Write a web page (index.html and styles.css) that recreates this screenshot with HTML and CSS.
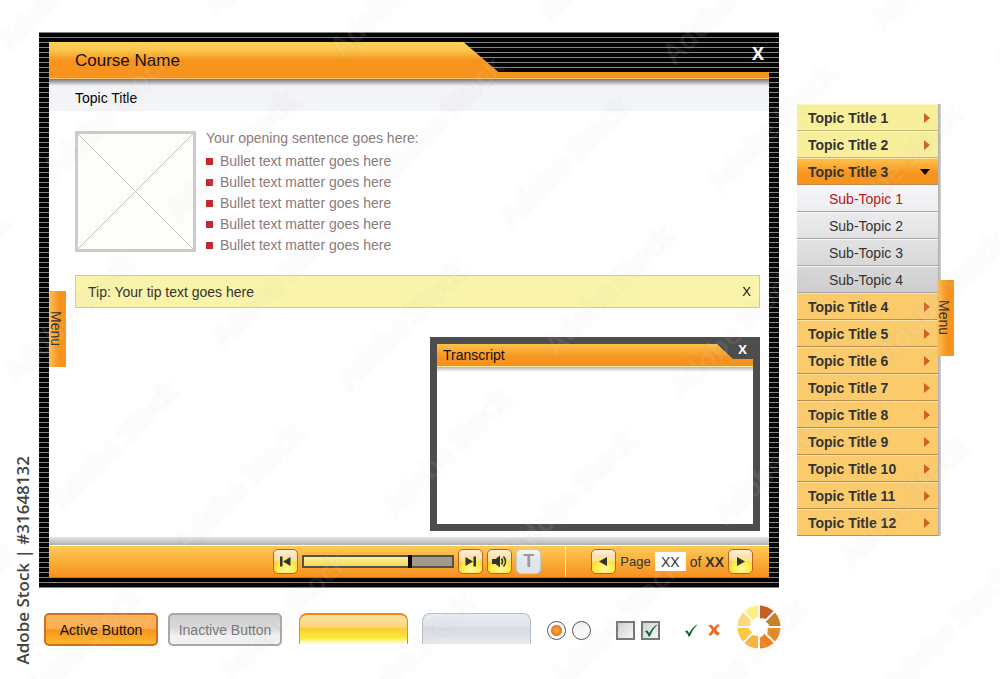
FILE: index.html
```html
<!DOCTYPE html>
<html lang="en">
<head>
  <meta charset="UTF-8" />
  <title>Course Player</title>
  <link rel="stylesheet" href="styles.css">
</head>
<body>
  <div class="page">
    <div class="credit">Adobe Stock | #31648132</div>

    <main class="main">
      <section class="player">
        <header class="player-header">
          <h1 class="course-name">Course Name</h1>
          <button class="close" aria-label="Close course">X</button>
        </header>

        <div class="player-body">
          <button class="menu-tab menu-tab-left">Menu</button>
          <h2 class="topic-title">Topic Title</h2>

          <div class="content">
            <div class="intro">
              <svg class="placeholder" viewBox="0 0 115 115" aria-hidden="true">
                <path d="M0 0L115 115M115 0L0 115" stroke="#c4c4c4" stroke-width="1" fill="none"/>
              </svg>
              <div class="intro-text">
                <p>Your opening sentence goes here:</p>
                <ul>
                  <li>Bullet text matter goes here</li>
                  <li>Bullet text matter goes here</li>
                  <li>Bullet text matter goes here</li>
                  <li>Bullet text matter goes here</li>
                  <li>Bullet text matter goes here</li>
                </ul>
              </div>
            </div>

            <div class="tip">
              <span>Tip: Your tip text goes here</span>
              <button class="tip-close" aria-label="Close tip">X</button>
            </div>

            <section class="transcript">
              <header class="transcript-header">
                <h3>Transcript</h3>
                <button class="close" aria-label="Close transcript">X</button>
              </header>
              <div class="transcript-body"></div>
            </section>
          </div>
        </div>

        <footer class="toolbar">
          <div class="media">
            <button class="tool" aria-label="Previous">
              <svg viewBox="0 0 23 23"><path d="M6 6.500h2.500v10H6zM16.500 7v9l-7.500-4.500z"/></svg>
            </button>
            <input class="seek" type="range" min="0" max="100" value="72" style="--value: 72%" aria-label="Seek">
            <button class="tool" aria-label="Next">
              <svg viewBox="0 0 23 23"><path d="M14.500 6.500H17v10h-2.500zM6.500 7v9l7.500-4.500z"/></svg>
            </button>
            <button class="tool" aria-label="Sound">
              <svg viewBox="0 0 23 23"><path d="M4 9h3.500l4.500-3.500v12L7.500 14H4z"/><path d="M13.500 8.500q2 3 0 6M15.500 6.500q4 5 0 10" fill="none" stroke="#333" stroke-width="1.600"/></svg>
            </button>
            <button class="tool tool-off" aria-label="Transcript">T</button>
          </div>
          <div class="pager">
            <button class="tool" aria-label="Previous page">
              <svg viewBox="0 0 23 23"><path d="M15 7v9L7 11.500z"/></svg>
            </button>
            <label for="page-number">Page</label>
            <input id="page-number" type="text" value="XX">
            <span>of <b>XX</b></span>
            <button class="tool" aria-label="Next page">
              <svg viewBox="0 0 23 23"><path d="M8 7v9l8-4.500z"/></svg>
            </button>
          </div>
        </footer>
      </section>

      <div class="samples">
        <button class="btn btn-active">Active Button</button>
        <button class="btn btn-inactive" disabled>Inactive Button</button>
        <div class="tab tab-on"></div>
        <div class="tab tab-off"></div>
        <div class="radios">
          <input type="radio" name="option" aria-label="Option 1" checked>
          <input type="radio" name="option" aria-label="Option 2">
        </div>
        <div class="checks">
          <label class="check"><input type="checkbox" aria-label="Unticked"></label>
          <label class="check">
            <input type="checkbox" aria-label="Ticked" checked>
            <svg viewBox="0 0 12 13"><path d="M0 7.500L2 6.200Q3.400 7.400 4 9.300Q7 3.500 11.700.5L12 1Q7.300 5.500 4.800 12.500H3.500Q2.300 9 0 7.500z"/></svg>
          </label>
        </div>
        <div class="marks">
          <svg class="tick" viewBox="0 0 12 13"><path d="M0 7.500L2 6.200Q3.400 7.400 4 9.300Q7 3.500 11.700.5L12 1Q7.300 5.500 4.800 12.500H3.500Q2.300 9 0 7.500z"/></svg>
          <svg class="cross" viewBox="0 0 12 12"><path d="M.3 1.800L3 .4Q5 1.800 6 3.700Q7.800 1 10 0L11.800 1.800Q9.500 3 8 5.800Q9.400 8 11.800 9L11 10.500L9.500 11.800Q7 10.500 5.800 8Q4.500 10.500 2.500 12L.4 10Q3 8.500 4 6Q2.500 3 .3 1.800z"/></svg>
        </div>
        <svg class="wheel" viewBox="-22 -22 44 44">
          <defs><path id="slice" d="M1-8.500V-21.500A21.500 21.500 0 0 1 14.500-15.900L6.700-8.100A9 9 0 0 0 1-8.500z"/></defs>
          <use href="#slice" fill="#c75f23"/>
          <use href="#slice" fill="#c9812b" transform="rotate(45)"/>
          <use href="#slice" fill="#e38a25" transform="rotate(90)"/>
          <use href="#slice" fill="#ef7f1c" transform="rotate(135)"/>
          <use href="#slice" fill="#fbb33a" transform="rotate(180)"/>
          <use href="#slice" fill="#fcc83f" transform="rotate(225)"/>
          <use href="#slice" fill="#fcd781" transform="rotate(270)"/>
          <use href="#slice" fill="#fbee82" transform="rotate(315)"/>
        </svg>
      </div>
    </main>

    <nav class="sidebar">
      <ul class="topics">
        <li class="light"><a href="#">Topic Title 1</a></li>
        <li class="light"><a href="#">Topic Title 2</a></li>
        <li class="open"><a href="#">Topic Title 3</a>
          <ul class="subtopics">
            <li class="current"><a href="#">Sub-Topic 1</a></li>
            <li><a href="#">Sub-Topic 2</a></li>
            <li><a href="#">Sub-Topic 3</a></li>
            <li><a href="#">Sub-Topic 4</a></li>
          </ul>
        </li>
        <li><a href="#">Topic Title 4</a></li>
        <li><a href="#">Topic Title 5</a></li>
        <li><a href="#">Topic Title 6</a></li>
        <li><a href="#">Topic Title 7</a></li>
        <li><a href="#">Topic Title 8</a></li>
        <li><a href="#">Topic Title 9</a></li>
        <li><a href="#">Topic Title 10</a></li>
        <li><a href="#">Topic Title 11</a></li>
        <li><a href="#">Topic Title 12</a></li>
      </ul>
      <button class="menu-tab menu-tab-right">Menu</button>
    </nav>
  </div>

  <svg class="watermark" aria-hidden="true">
    <defs>
      <pattern id="mark" width="230" height="240" patternUnits="userSpaceOnUse" patternTransform="translate(62 512) rotate(-45) translate(0 -40)">
        <text x="0" y="40">Adobe Stock</text>
        <text x="59" y="158">Adobe Stock</text>
      </pattern>
    </defs>
    <rect width="100%" height="100%" fill="url(#mark)"/>
  </svg>
</body>
</html>
```
FILE: styles.css
```css
* {
  box-sizing: border-box;
}

body {
  margin: 0;
  background: #fff;
  color: #333;
  font-family: "Liberation Sans", Arial, sans-serif;
  font-size: 14px;
}

h1, h2, h3, p, ul {
  margin: 0;
  padding: 0;
  font-weight: normal;
}

ul {
  list-style: none;
}

a {
  color: inherit;
  text-decoration: none;
}

button, input {
  font: inherit;
  margin: 0;
  padding: 0;
  border: none;
  background: none;
}

button {
  cursor: pointer;
}

.page {
  display: flex;
  padding: 32px 56px 0 0;
}

.credit {
  width: 39px;
  padding-right: 9px;
  align-self: flex-end;
  writing-mode: vertical-rl;
  transform: rotate(180deg);
  color: #444;
  font-family: "Open Sans", sans-serif;
  font-size: 17px;
  font-weight: 600;
  line-height: 28px;
  white-space: nowrap;
}

.main {
  flex: 1;
  min-width: 0;
  padding-bottom: 16px;
}

/* player window */

.player {
  padding: 10px 10px 11px;
  background: repeating-linear-gradient(#858585 0 1px, #050505 1px 5px);
}

.player-header {
  position: relative;
  display: flex;
  align-items: center;
  justify-content: space-between;
  height: 37px;
  padding: 0 5px 0 26px;
}

.player-header::before {
  content: "";
  position: absolute;
  inset: 0;
  background: linear-gradient(#fcd05a 0, #fbc94f 20%, #f7941e 50%, #f7941e 96%, #fcc46c 98%);
  clip-path: polygon(0 0, calc(57% + 4px) 0, calc(57% + 39px) 30px, 100% 30px, 100% 100%, 0 100%);
}

.course-name {
  position: relative;
  color: #111;
  font-size: 17px;
}

.close {
  position: relative;
  color: #fff;
  font-family: "Open Sans", sans-serif;
  font-weight: bold;
}

.player-header .close {
  align-self: flex-start;
  font-size: 18px;
  line-height: 22px;
}

.player-body {
  position: relative;
  background: #fff;
}

.player-body::before {
  content: "";
  display: block;
  height: 7px;
  background: linear-gradient(#77777a, #f3f4f7);
}

.player-body::after {
  content: "";
  display: block;
  height: 8px;
  border-bottom: 1px solid #fff;
  background: linear-gradient(#e4e4e4, #b2b2b2);
}

.topic-title {
  padding: 0 26px;
  background: #f3f4f7;
  color: #000;
  font-size: 14px;
  line-height: 25px;
}

.content {
  display: flex;
  flex-direction: column;
  padding: 20px 9px 6px 26px;
}

.intro {
  display: flex;
  gap: 10px;
  height: 121px;
  margin-bottom: 23px;
  color: #8a7b79;
}

.placeholder {
  width: 121px;
  height: 121px;
  border: 3px solid #ccc;
  background: #fdfefa;
}

.intro p {
  line-height: 14px;
  margin-bottom: 6px;
}

.intro li {
  display: flex;
  align-items: center;
  gap: 7px;
  line-height: 21px;
}

.intro li::before {
  content: "";
  width: 7px;
  height: 7px;
  background: #c3272f;
}

.tip {
  display: flex;
  align-items: center;
  justify-content: space-between;
  height: 33px;
  padding: 0 8px 0 12px;
  margin-bottom: 29px;
  border: 1px solid #cbc9b5;
  background: #f9f4a9;
}

.tip-close {
  color: #111;
  font-size: 13px;
}

.transcript {
  align-self: flex-end;
  width: 48%;
  min-width: 330px;
  border: 7px solid #4d4d4d;
  background: #4d4d4d;
}

.transcript-header {
  position: relative;
  display: flex;
  justify-content: space-between;
  height: 23px;
  padding: 0 6px;
}

.transcript-header::before {
  content: "";
  position: absolute;
  inset: 0;
  background: linear-gradient(#fcc04a, #f7941e 60%, #f7901e 94%, #fdeca0 95%);
  clip-path: polygon(0 0, calc(100% - 36px) 0, calc(100% - 20px) 15px, 100% 15px, 100% 100%, 0 100%);
}

.transcript h3 {
  position: relative;
  color: #111;
  font-size: 14px;
  line-height: 22px;
}

.transcript .close {
  font-size: 13px;
  line-height: 11px;
  align-self: flex-start;
}

.transcript-body {
  height: 157px;
  background: linear-gradient(#b5b5b5, #fff 5px);
}

/* pull-out menu handles */

.menu-tab {
  position: absolute;
  width: 17px;
  height: 76px;
  padding-right: 3px;
  writing-mode: vertical-rl;
  color: #333;
  line-height: 14px;
  background: linear-gradient(90deg, #fbc05a, #f7941e 60%);
}

.menu-tab-left {
  left: 0;
  top: 212px;
}

.menu-tab-right {
  right: -13px;
  top: 176px;
}

/* bottom toolbar */

.toolbar {
  display: flex;
  justify-content: flex-end;
  height: 31px;
  padding-right: 16px;
  background: linear-gradient(#fdcb55, #f7901e);
}

.media, .pager {
  display: flex;
  align-items: center;
  gap: 4px;
}

.media {
  padding-right: 24px;
  border-right: 1px solid #fff0d0;
}

.pager {
  padding-left: 25px;
}

.pager label {
  font-size: 13px;
}

.tool {
  display: flex;
  align-items: center;
  justify-content: center;
  width: 25px;
  height: 25px;
  border: 1px solid #b9641d;
  border-radius: 5px;
  background: radial-gradient(circle at 55% 85%, #fff6a0 0, #fdee4c 35%, transparent 60%), linear-gradient(#fdeed8 0, #fbdca0 48%, #fccb38 52%, #fde33c);
  color: #333;
}

.tool svg {
  width: 23px;
  height: 23px;
  fill: #333;
}

.tool-off {
  border-color: #c3ccd3;
  background: linear-gradient(#f4f6f7, #e1e6ea 50%, #dde3e8);
  color: #a49694;
  font-size: 18px;
  font-weight: bold;
}

.seek {
  width: 152px;
  height: 13px;
  border: 2px solid #55524a;
  background:
    linear-gradient(#a09a8e, #a09a8e) right / calc(100% - var(--value)) 100% no-repeat,
    linear-gradient(#fcf09a, #f8d85a);
  appearance: none;
}

.seek::-webkit-slider-thumb {
  appearance: none;
  width: 4px;
  height: 13px;
  background: #0a0a0a;
}

.pager input {
  width: 31px;
  height: 19px;
  background: #fff;
  color: #333;
  font-size: 14px;
  text-align: center;
}

/* sample controls under the player */

.samples {
  display: flex;
  align-items: flex-start;
  height: 44px;
  padding-left: 5px;
  margin: 17px -8px 0 0;
}

.btn {
  width: 114px;
  height: 33px;
  margin: 8px 10px 0 0;
  border: 2px solid #d2701c;
  border-radius: 5px;
}

.btn-active {
  border-color: #d2701c;
  background: linear-gradient(#fbb55c 0, #fcb056 45%, #f7941e 52%, #fcb82e);
  color: #111;
}

.btn-inactive {
  margin-right: 17px;
  border-color: #a8a8a8;
  background: linear-gradient(#cfcfcf 0, #d9d9d9 45%, #f1f1f3 70%);
  color: #777;
}

.tab {
  width: 109px;
  height: 31px;
  margin: 8px 14px 0 0;
  border-radius: 8px 8px 0 0;
}

.tab-on {
  border: solid #f08519;
  border-width: 2px 1px 0;
  background: linear-gradient(#fce0a0 0, #fbd777 42%, #fccb38 46%, #fdea3c 80%, #fff);
}

.tab-off {
  margin-right: 16px;
  border: solid #b3c1cc;
  border-width: 1px 1px 0;
  background: linear-gradient(#e9ecef 0, #dfe4e9 42%, #d5dbe1 46%, #e8ebee);
}

.radios, .checks, .marks {
  display: flex;
  align-items: center;
  height: 44px;
  padding-top: 6px;
}

.radios {
  gap: 6px;
  margin-right: 25px;
}

.radios input {
  width: 19px;
  height: 19px;
  border: 1px solid #555;
  border-radius: 50%;
  background: linear-gradient(#eee, #fff);
  appearance: none;
}

.radios input:checked {
  background: radial-gradient(circle, #fcb53e 0, #f58220 4px, #e8731c 5px, #fff 6px);
}

.checks {
  gap: 6px;
  margin-right: 25px;
}

.check {
  position: relative;
  display: flex;
}

.check input {
  width: 19px;
  height: 19px;
  border: 2px solid #777;
  background: linear-gradient(135deg, #d2d2d2, #f5f5f5);
  appearance: none;
}

.check svg {
  position: absolute;
  left: 4px;
  top: 3px;
  width: 12px;
  height: 13px;
  fill: #0b6a33;
}

.marks {
  gap: 11px;
  margin-right: 17px;
}

.tick {
  width: 12px;
  height: 13px;
  fill: #0b6a33;
}

.cross {
  width: 12px;
  height: 12px;
  fill: #f26a21;
}

.wheel {
  width: 44px;
  height: 44px;
}

/* topic navigation */

.sidebar {
  position: relative;
  align-self: flex-start;
  width: 144px;
  margin: 72px 3px 0 18px;
  padding-right: 3px;
  background: linear-gradient(90deg, #aaa, #d5d5d5) right / 3px 100% no-repeat;
}

.topics a {
  display: flex;
  align-items: center;
  justify-content: space-between;
  height: 27px;
  padding: 0 8px 0 11px;
  border-top: 1px solid #fde3a4;
  border-bottom: 1px solid #b88d52;
  background: #fbcb6b;
  color: #333;
  font-weight: bold;
}

.topics a::after {
  content: "";
  border: solid transparent;
  border-width: 5px 0 5px 6px;
  border-left-color: #cf6127;
}

.topics .light a {
  border-color: #fbf6c0 transparent #c2b878;
  background: #f8ef9b;
}

.topics .open > a {
  background: linear-gradient(#fcc04a, #f7941e 60%);
}

.topics .open > a::after {
  border-width: 6px 5px 0;
  border-color: #000 transparent;
}

.topics .subtopics {
  background: linear-gradient(#f7f7fa, #cdcdcd);
}

.topics .subtopics a {
  padding-left: 32px;
  border-color: #f7f7f7 transparent #a5a5a5;
  background: none;
  font-weight: normal;
}

.topics .subtopics a::after {
  content: none;
}

.topics .current a {
  color: #b5121b;
}

.watermark {
  position: fixed;
  inset: 0;
  width: 100%;
  height: 100%;
  pointer-events: none;
}

.watermark text {
  fill: rgba(255, 255, 255, 0.08);
  stroke: rgba(120, 120, 120, 0.02);
  stroke-width: 5px;
  stroke-linejoin: round;
  paint-order: stroke;
  font-family: "Open Sans", sans-serif;
  font-size: 28px;
  font-weight: 600;
}
```
